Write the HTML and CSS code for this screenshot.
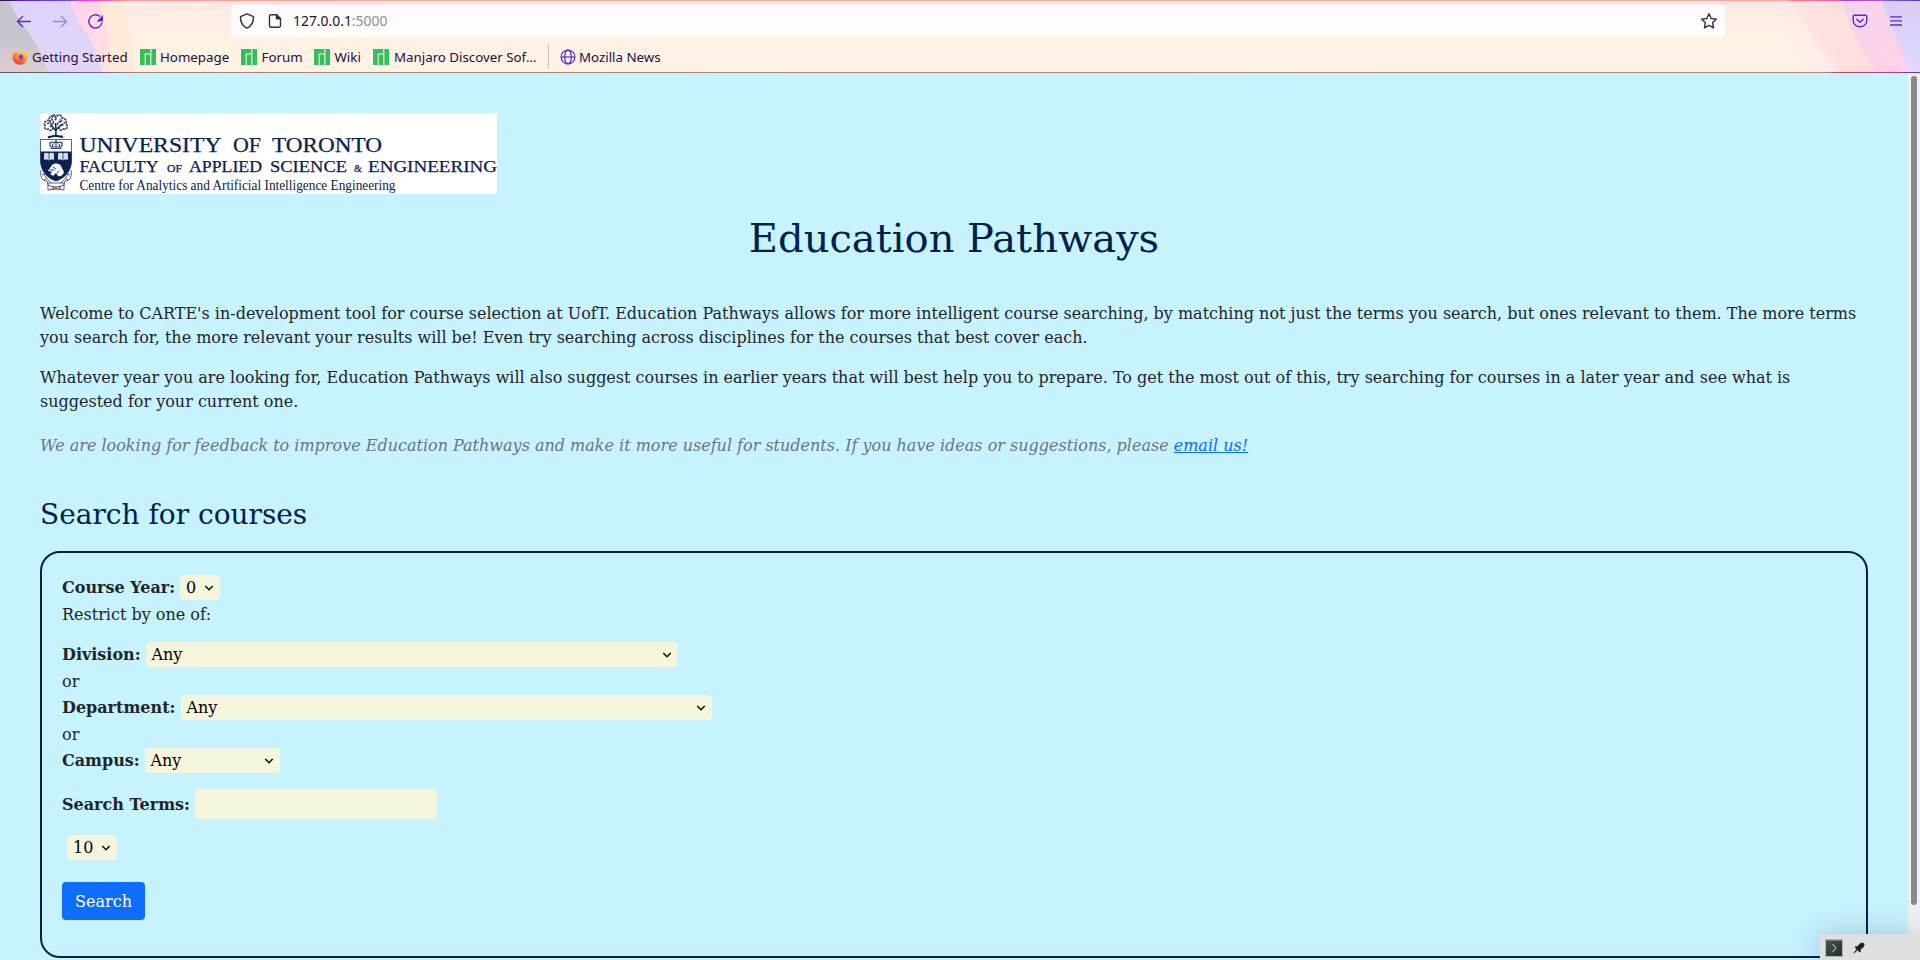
FILE: index.html
```html
<!DOCTYPE html>
<html lang="en">
<head>
<meta charset="utf-8">
<title>Education Pathways</title>
<link rel="stylesheet" href="styles.css">
</head>
<body>
<svg class="defs" width="0" height="0" aria-hidden="true">
  <symbol id="manjaro" viewBox="0 0 16 16"><path fill="#35bf5c" d="M0 0h10.3v4.5H4.7V16H0zM5.7 5.600h4.600V16H5.700zM11.400 0H16v16h-4.600z"/></symbol>
  <symbol id="chevron" viewBox="0 0 10 8"><path d="M1.300 2 5 5.700 8.700 2" fill="none" stroke="#111" stroke-width="1.600"/></symbol>
</svg>
<header class="chrome">
  <svg class="theme" width="1920" height="73" viewBox="0 0 1920 73" aria-hidden="true">
    <defs>
      <linearGradient id="base" x2="0" y2="1"><stop offset="0" stop-color="#ffe8e5"/><stop offset=".5" stop-color="#fff1e4"/><stop offset="1" stop-color="#fff2e6"/></linearGradient>
      <linearGradient id="pinkL" x2="1" y2="1"><stop offset="0" stop-color="#ffccf2"/><stop offset="1" stop-color="#ffe2dc"/></linearGradient>
      <linearGradient id="lilL" x2=".5" y2="1"><stop offset="0" stop-color="#dcd2fa"/><stop offset="1" stop-color="#e2d5fa"/></linearGradient>
      <linearGradient id="greyL" x2="0" y2="1"><stop offset=".5" stop-color="#c8c4ce"/><stop offset="1" stop-color="#dacfd0"/></linearGradient>
      <linearGradient id="haze" gradientUnits="userSpaceOnUse" x1="1785" y1="40" x2="1835" y2="22"><stop offset="0" stop-color="#ffe6ea" stop-opacity="0"/><stop offset="1" stop-color="#ffe6ea"/></linearGradient>
      <linearGradient id="peachR" x2="1"><stop offset="0" stop-color="#ffe4e0"/><stop offset="1" stop-color="#ffd9dd"/></linearGradient>
      <linearGradient id="pinkR" x2=".7" y2="1"><stop offset="0" stop-color="#f2d4ee"/><stop offset="1" stop-color="#ffd1e5"/></linearGradient>
      <linearGradient id="lilR" x2="0" y2="1"><stop offset="0" stop-color="#d9cdf3"/><stop offset="1" stop-color="#e1d7ff"/></linearGradient>
      <linearGradient id="top" gradientUnits="userSpaceOnUse" x2="1920"><stop offset="0" stop-color="#24104a"/><stop offset=".012" stop-color="#5a24c8"/><stop offset=".04" stop-color="#8050f0"/><stop offset=".041" stop-color="#ff38c8"/><stop offset=".055" stop-color="#ff5cae"/><stop offset=".065" stop-color="#ff9a90"/><stop offset=".2" stop-color="#ffa8a0"/><stop offset=".93" stop-color="#ffa8a0"/><stop offset=".933" stop-color="#ff807e"/><stop offset=".958" stop-color="#ff58a2"/><stop offset=".96" stop-color="#a040cc"/><stop offset=".98" stop-color="#b65ad8"/><stop offset=".981" stop-color="#8458f0"/><stop offset="1" stop-color="#583bb0"/></linearGradient>
      <linearGradient id="bottom" gradientUnits="userSpaceOnUse" x2="1920"><stop offset="0" stop-color="#66525e"/><stop offset=".024" stop-color="#74586a"/><stop offset=".026" stop-color="#70509a"/><stop offset=".052" stop-color="#8c5a94"/><stop offset=".07" stop-color="#b68070"/><stop offset=".95" stop-color="#ba8a76"/><stop offset=".956" stop-color="#b84f5c"/><stop offset=".99" stop-color="#c83878"/><stop offset=".991" stop-color="#6638c0"/><stop offset="1" stop-color="#6638c0"/></linearGradient>
    </defs>
    <path fill="url(#base)" d="M0 0h1920v73H0z"/>
    <path fill="#ffeadb" d="M0 0h122q12 32 12 73H0z"/>
    <path fill="url(#pinkL)" d="M0 0h97q14 32 13 73H0z"/>
    <path fill="url(#lilL)" d="M0 0h69q6 17 17 32 12 18 16 41H0z"/>
    <path fill="url(#greyL)" d="M0 0h9q5 14 17 29 14 19 23 44H0z"/>
    <path fill="url(#haze)" d="M1740 0h120v73h-120z"/>
    <path fill="url(#peachR)" d="M1795 0h125v73h-77q-36-33-48-73z"/>
    <path fill="url(#pinkR)" d="M1843 0h77v73h-42q-29-36-35-73z"/>
    <path fill="url(#lilR)" d="M1881 0h39v73h-10z"/>
    <path fill="url(#top)" d="M0 0h1920v1H0z"/>
    <path fill="url(#bottom)" d="M0 72h1920v1H0z"/>
  </svg>
  <div class="toolbar">
    <svg class="nav" width="120" height="34" viewBox="0 0 120 34" fill="none" stroke="#5b2bc8" stroke-width="1.400">
      <path d="M31 17.500H17.500M23 12 17.500 17.500l5.500 5.500"/>
      <path d="M53 17.500h13.500M61 12l5.500 5.500-5.500 5.500" opacity=".45"/>
      <path d="M102 18.500a6.600 6.600 0 1 1-2-5.900"/><path d="M103 11v6.500h-6.500z" fill="#5b2bc8" stroke="none"/>
    </svg>
    <div class="urlbar">
      <svg width="16" height="16" viewBox="0 0 16 16" fill="none" stroke="#352c50" stroke-width="1.400" stroke-linejoin="round"><path d="M8 .9 14.500 3.700c.2 5.300-2.100 9.300-6.500 11.500C3.600 13 1.300 9 1.500 3.700z"/></svg>
      <svg class="doc" width="16" height="16" viewBox="0 0 16 16" fill="none" stroke="#352c50" stroke-width="1.400" stroke-linejoin="round"><path d="M9.500 1.700H4a1.500 1.500 0 0 0-1.500 1.500v9.600A1.500 1.500 0 0 0 4 14.300h8a1.500 1.500 0 0 0 1.500-1.500V5.700z"/><path fill="#352c50" d="M9.500 1.700v4h4z"/></svg>
      <span class="url">127.0.0.1<span class="port">:5000</span></span>
      <svg class="star" width="18" height="18" viewBox="0 0 18 18" fill="none" stroke="#352c50" stroke-width="1.400" stroke-linejoin="round"><path d="m9 1.700 2.200 4.800 5.200.6-3.800 3.600 1 5.200L9 13.400l-4.600 2.500 1-5.200L1.600 7.100l5.200-.6z"/></svg>
    </div>
    <svg class="pocket" width="16" height="16" viewBox="0 0 16 16" fill="none" stroke="#5b2bc8" stroke-width="1.400" stroke-linecap="round" stroke-linejoin="round"><path d="M2.500 2.200h11a1.300 1.300 0 0 1 1.300 1.300V7.500a6.800 6.300 0 0 1-13.600 0v-4a1.300 1.300 0 0 1 1.300-1.300z"/><path d="M4.800 6.200 8 9.200l3.200-3"/></svg>
    <svg class="menu" width="12" height="10" viewBox="0 0 12 10" stroke="#5b2bc8" stroke-width="1.300"><path d="M0 .8h12M0 4.900h12M0 9h12"/></svg>
  </div>
  <nav class="bookmarks">
    <span class="bm bm-start"><svg width="16" height="16" viewBox="0 0 16 16"><defs><linearGradient id="fx" x1=".8" x2=".3" y2="1"><stop stop-color="#ffe34a"/><stop offset=".45" stop-color="#ff9a25"/><stop offset="1" stop-color="#f9284f"/></linearGradient></defs><path fill="url(#fx)" d="M10.200.4c2 1.500 5.300 4 5.300 8.200A7.400 7.400 0 0 1 8 15.800 7.400 7.400 0 0 1 .5 8.400C.5 6 1.300 4 2.500 2.500l.9 1.700L5 2.500l.8 1.700c1.700-.6 3-.2 4 .6C10.400 3.300 10 1.800 10.200.4z"/><circle cx="8.300" cy="8.300" r="2.900" fill="#7342dc"/><path fill="#ff9a25" d="M3.700 5.800c1.600-.8 3.400-.7 4.400.5-.4 1-1.700 1-2.200 1.900.4 1 1.700 1.500 3.200.8-1.500 3.300-5.700 1.500-5.400-3.200z"/></svg>Getting Started</span>
    <span class="bm bm-home"><svg width="16" height="16"><use href="#manjaro"/></svg>Homepage</span>
    <span class="bm bm-forum"><svg width="16" height="16"><use href="#manjaro"/></svg>Forum</span>
    <span class="bm bm-wiki"><svg width="16" height="16"><use href="#manjaro"/></svg>Wiki</span>
    <span class="bm bm-soft"><svg width="16" height="16"><use href="#manjaro"/></svg>Manjaro Discover Sof…</span>
    <span class="sep"></span>
    <span class="bm bm-news"><svg width="16" height="16" viewBox="0 0 16 16" fill="none" stroke="#5b2bc8" stroke-width="1.200"><circle cx="8" cy="8" r="6.900"/><ellipse cx="8" cy="8" rx="3.300" ry="6.900"/><path d="M1 8h14"/></svg>Mozilla News</span>
  </nav>
</header>
<div class="viewport">
  <main class="page">
    <svg class="logo" width="457" height="81" viewBox="0 0 457 81" role="img" aria-label="University of Toronto">
      <path fill="#fff" d="M0 0h457v81H0z"/>
      <g fill="none" stroke="#0b2152" stroke-width="1">
        <path d="M15.500 24c1-5 .5-9 0-14M16 18l-5-6M16 17l6-6M14 23l-4 1M17 23l5 1" stroke-width="1.500"/>
        <path stroke="#344873" stroke-width="1.700" stroke-dasharray="2.500 .7" d="M5 13c-2-4 2-6 4-6 0-5 5-5 6.500-3C18 1 22 2 22 5c4 0 5 4 4 6 3 3 0 6-3 5-2 2-4 1-4-1-2 1-5 1-6 0-1 3-4 3-5 1-3 1-4-1-3-3zM7 11c3-3 4 2 6-1s-4-3 0-6M18 12c-2-3 4-3 2-6M22 13c1-3 3-2 2-4M10 14l3-3M15 7l2-3M9 9l3-2M20 9l3-2M13 3l2-2"/>
        <path stroke-width="2" stroke-dasharray="3 1" d="M8 24.500c4-2 12-2 16 0"/>
      </g>
      <path d="M.5 26.500h31V48c0 9-6 17-15.500 20C6.500 65 .5 57 .5 48z" fill="#fff" stroke="#52648c"/>
      <path d="M.5 38.500h31V48c0 9-6 17-15.500 20C6.500 65 .5 57 .5 48z" fill="#0b2152"/>
      <path d="M10.500 35.500h11M11 34c-3-4 0-6 3-4l2-2 2 2c3-2 6 0 3 4zM16 27v7M13 31l-1 3M19 31l1 3" fill="none" stroke="#344873" stroke-width="1.200"/>
      <path d="M4 40.500c2-1 4-.8 5 .3 1-1.100 3-1.300 5-.3V47c-2-.8-4-.5-5 .5-1-1-3-1.300-5-.5zM18 40.500c2-1 4-.8 5 .3 1-1.100 3-1.300 5-.3V47c-2-.8-4-.5-5 .5-1-1-3-1.300-5-.5z" fill="#d4dae6"/>
      <path d="M9 41v6M23 41v6" stroke="#0b2152" stroke-width=".7"/>
      <path d="M8 58l4-6c3-2 7-2 9 1l3 6c-1 4-4 5-6 4l-2-3-3 3-3-2 2-2z" fill="#f0f3f8"/>
      <path d="M10 57h4M13 54l3 2M17 60l2-2" stroke="#0b2152" stroke-width=".8"/>
      <path d="M1 57c-1 4 0 8 2 10l4 1 1 4 6 2M31 57c1 4 0 8-2 10l-4 1-1 4-6 2M4 59c0 4 4 9 8 11M28 59c0 4-4 9-8 11M2 62l3-1M4 67l3-2M30 62l-3-1M28 67l-3-2M8 70h16v7c-5-1-11-1-16 0z" fill="none" stroke="#52648c" stroke-width="1"/>
      <text class="logo-tiny" x="10.500" y="76" textLength="11">ARBOR</text>
      <g class="logo-text">
        <text x="39.500" y="39" font-size="20" textLength="142" lengthAdjust="spacingAndGlyphs">UNIVERSITY</text>
        <text x="193" y="39" font-size="20" textLength="28" lengthAdjust="spacingAndGlyphs">OF</text>
        <text x="232" y="39" font-size="20" textLength="110" lengthAdjust="spacingAndGlyphs">TORONTO</text>
        <text x="39.500" y="58.500" font-size="17" textLength="79" lengthAdjust="spacingAndGlyphs">FACULTY</text>
        <text x="127" y="58.500" font-size="11" textLength="15" lengthAdjust="spacingAndGlyphs">OF</text>
        <text x="149" y="58.500" font-size="17" textLength="73" lengthAdjust="spacingAndGlyphs">APPLIED</text>
        <text x="230" y="58.500" font-size="17" textLength="77" lengthAdjust="spacingAndGlyphs">SCIENCE</text>
        <text x="314" y="58.500" font-size="10">&amp;</text>
        <text x="328" y="58.500" font-size="17" textLength="129" lengthAdjust="spacingAndGlyphs">ENGINEERING</text>
      </g>
      <text class="logo-sub" x="39.500" y="77" textLength="316" lengthAdjust="spacingAndGlyphs">Centre for Analytics and Artificial Intelligence Engineering</text>
    </svg>
    <h1>Education Pathways</h1>
    <p>Welcome to CARTE's in-development tool for course selection at UofT. Education Pathways allows for more intelligent course searching, by matching not just the terms you search, but ones relevant to them. The more terms<br>you search for, the more relevant your results will be! Even try searching across disciplines for the courses that best cover each.</p>
    <p>Whatever year you are looking for, Education Pathways will also suggest courses in earlier years that will best help you to prepare. To get the most out of this, try searching for courses in a later year and see what is<br>suggested for your current one.</p>
    <p class="feedback">We are looking for feedback to improve Education Pathways and make it more useful for students. If you have ideas or suggestions, please <a href="#">email us!</a></p>
    <h2>Search for courses</h2>
    <form class="panel">
      <div class="row"><b class="w-year">Course Year:</b><span class="select s-year">0<svg width="10" height="8"><use href="#chevron"/></svg></span></div>
      <div class="text restrict">Restrict by one of:</div>
      <div class="row"><b class="w-div">Division:</b><span class="select s-wide s-div">Any<svg width="10" height="8"><use href="#chevron"/></svg></span></div>
      <div class="text">or</div>
      <div class="row"><b class="w-dep">Department:</b><span class="select s-wide">Any<svg width="10" height="8"><use href="#chevron"/></svg></span></div>
      <div class="text">or</div>
      <div class="row"><b class="w-campus">Campus:</b><span class="select s-campus">Any<svg width="10" height="8"><use href="#chevron"/></svg></span></div>
      <div class="row terms"><b class="w-terms">Search Terms:</b><input class="input" type="text"></div>
      <div class="row count"><span class="select s-count">10<svg width="10" height="8"><use href="#chevron"/></svg></span></div>
      <button class="btn" type="button">Search</button>
    </form>
  </main>
  <div class="scrollbar"><div class="thumb"></div></div>
</div>
<div class="tray">
  <svg width="18" height="18" viewBox="0 0 18 18"><defs><linearGradient id="term" x2="1" y2="1"><stop stop-color="#445351"/><stop offset="1" stop-color="#262e33"/></linearGradient></defs><path fill="#aeb4b4" d="M0 0h18v18H0z"/><path fill="url(#term)" d="M1 1h16v16H1z"/><path d="M1 1.500h16" stroke="#6c7a78"/><path d="m7.500 5 3.500 4-3.500 4" fill="none" stroke="#9aa3a3" stroke-width="1.200"/></svg>
  <svg class="pin" width="12" height="12" viewBox="0 0 14 14"><path fill="#202226" d="m8.300 1.300 1.500.3L11.200.3l2.500 2.500-1 1.600.2 1.200-3.900 3.200v2.600L7.800 12.200 5.400 9.700 1 13.500l-.6-.5L4 8.400 2 6.100l.8-1.100h2.500z"/></svg>
</div>
</body>
</html>
```
FILE: styles.css
```css
* { box-sizing: border-box; }
body {
  margin: 0;
  width: 1920px;
  height: 960px;
  overflow: hidden;
  position: relative;
  background: #c7f2ff;
  color: #212529;
  font: 16px/24px "DejaVu Serif", serif;
}
svg { display: block; flex: none; }
.defs { position: absolute; }

.chrome {
  position: relative;
  height: 73px;
  padding-top: 5px;
  font: 13.3px/18px "Noto Sans", sans-serif;
  color: #20123a;
}
.theme { position: absolute; left: 0; top: 0; }
.toolbar { position: relative; display: flex; align-items: center; height: 32px; }
.nav { margin: 0 111px 0 0; }
.urlbar {
  width: 1494px;
  height: 32px;
  padding: 0 7px 0 8px;
  display: flex;
  align-items: center;
  background: rgba(255, 255, 255, .8);
  border-radius: 4px;
}
.doc { margin-left: 12px; }
.url { margin-left: 10px; font-size: 13.9px; }
.port { color: #918ca3; }
.star { margin-left: auto; }
.pocket { margin-left: 127px; }
.menu { margin-left: 22px; }
.bookmarks { position: relative; display: flex; align-items: center; height: 25px; margin-top: 7px; padding-left: 12px; }
.bm { display: flex; align-items: center; gap: 4.500px; white-space: nowrap; }
.bm-start { width: 128px; gap: 4px; }
.bm-home { width: 101px; gap: 4px; }
.bm-forum { width: 73px; }
.bm-wiki { width: 59px; }
.bm-soft { width: 175px; gap: 5px; }
.bm-news { gap: 3.500px; }
.sep { width: 1px; height: 25px; background: #ccc0c4; margin-right: 10.500px; }

.viewport { display: flex; height: 887px; }
.page { width: 1908px; padding: 40px 40px 0; white-space: nowrap; }
.logo-text { font-family: "Liberation Serif", serif; fill: #0b2152; stroke: #0b2152; stroke-width: .25; }
.logo-sub { font: 14px "Liberation Serif", serif; fill: #0b2152; }
.logo-tiny { font: 4.500px "Liberation Serif", serif; fill: #0b2152; }
h1, h2 { margin: 0; font-weight: 400; color: #00204e; }
h1 { margin-top: 20px; font-size: 40px; line-height: 48px; text-align: center; }
p { margin: 0 0 16px; }
h1 + p { margin-top: 40px; }
.feedback { margin-top: 20px; font-style: italic; color: #6c757d; }
.feedback a { color: #0d6efd; }
h2 { margin-top: 40px; font-size: 28px; line-height: 34px; }

.panel {
  height: 407px;
  margin-top: 19px;
  padding: 22px 20px 0;
  border: 2px solid #00204e;
  border-radius: 20px;
}
.row { display: flex; align-items: center; height: 25px; }
.text { height: 28px; line-height: 30px; }
.restrict { height: 42px; }
.w-year { width: 118px; }
.w-div { width: 84px; }
.w-dep { width: 119px; }
.w-campus { width: 83px; }
.w-terms { width: 133px; padding-top: 2px; }
.select {
  display: flex;
  align-items: center;
  justify-content: space-between;
  height: 25px;
  padding: 0 6px 0 5.500px;
  background: #f5f5dc;
  border-radius: 4px;
  color: #000;
}
.s-year { width: 40px; padding-left: 6px; }
.s-wide { width: 531px; }
.s-div { width: 532px; }
.s-campus { width: 135px; }
.s-count { width: 50px; margin-left: 5px; padding-left: 6px; }
.terms { height: 30px; margin-top: 16px; }
.input { width: 242px; height: 30px; padding: 0 6px; border: 0; border-radius: 4px; background: #f5f5dc; }
.count { margin-top: 16px; }
.btn {
  display: block;
  margin-top: 22px;
  width: 83px;
  height: 38px;
  padding: 2px 0 0;
  border: 0;
  border-radius: 4px;
  background: #0d6efd;
  color: #fff;
  font: 16px/24px "DejaVu Serif", serif;
}

.scrollbar { width: 12px; padding: 3px 3px 0; background: #f0f0f1; }
.thumb { width: 6px; height: 829px; border-radius: 3px; background: #88898a; }

.tray {
  position: absolute;
  left: 1820px;
  top: 934px;
  width: 100px;
  height: 26px;
  padding: 5px 5px 0;
  display: flex;
  gap: 10px;
  background: #dedfe1;
  border-radius: 3px 0 0 0;
  box-shadow: 0 4px 32px rgba(0, 30, 40, .28);
}
.pin { margin-top: 3px; }
```
